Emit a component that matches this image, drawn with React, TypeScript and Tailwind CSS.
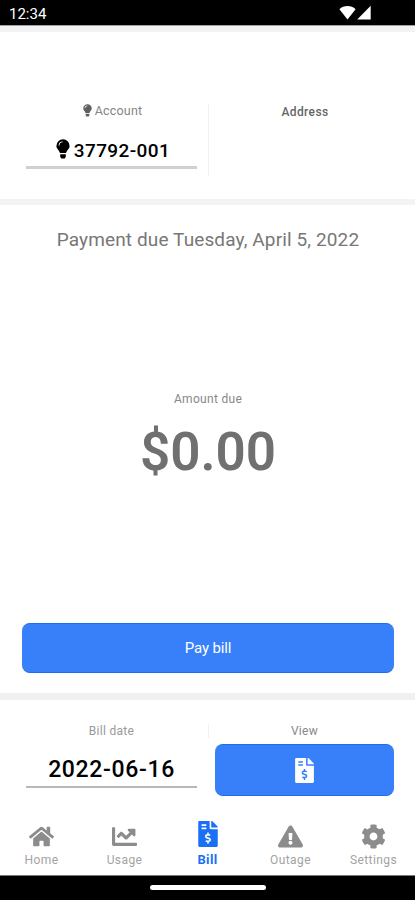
import React from "react";
import {
  FaHome,
  FaChartLine,
  FaFileInvoiceDollar,
  FaExclamationTriangle,
  FaCog,
} from "react-icons/fa";

function Bulb({ className }: { className: string }) {
  return (
    <svg className={className} viewBox="0 0 14 20" fill="currentColor">
      <path
        fillRule="evenodd"
        d="M7 0.3A6.6 6.6 0 0 0 0.4 6.9C0.4 9.8 3.3 11.1 4 14.1H10C10.7 11.1 13.6 9.8 13.6 6.9A6.6 6.6 0 0 0 7 0.3ZM6.6 2.4C4.2 2.4 2.6 4 2.6 6.4H3.5C3.5 4.5 4.8 3.3 6.6 3.3Z"
      />
      <path d="M4.2 15.3H9.8V17.7L8.8 19.4H5.2L4.2 17.7Z" />
    </svg>
  );
}

function StatusBar() {
  return (
    <header className="flex h-[25px] shrink-0 items-start justify-between bg-black pl-[9px] pr-[44px] text-white">
      <span className="pt-[6px] text-[15px] leading-[17px]">12:34</span>
      <div className="flex gap-[1px] pt-[5px]">
        <svg width="17" height="15" viewBox="0 0 17 15" fill="currentColor">
          <path d="M0.4 4.3C4.5 -0.1 12.5 -0.1 16.6 4.3L8.5 14.6Z" />
        </svg>
        <svg width="14" height="15" viewBox="0 0 14 15" fill="currentColor">
          <path d="M13.7 0.8V14.6H0.2Z" />
        </svg>
      </div>
    </header>
  );
}

function AccountPanel() {
  return (
    <section className="flex h-[167px] shrink-0 pt-[72px]">
      <div className="w-[208px] pl-[26px] pr-[11px]">
        <div className="flex h-[13px] items-center justify-center gap-[3px] pl-[2px] text-[12.5px] leading-[13px] text-[#858585]">
          <Bulb className="h-[13px] w-[9px] text-[#606060]" />
          <span className="tracking-[0.2px]">Account</span>
        </div>
        <div className="mt-[18px] flex h-[34px] items-start justify-center gap-[4px] border-b-[3px] border-[#d0d0d0] pl-[3px] pt-[4px] text-black">
          <Bulb className="h-[20px] w-[14px]" />
          <span className="text-[19px] font-medium leading-[23px] tracking-[0.4px]">37792-001</span>
        </div>
      </div>
      <div className="h-[72px] w-px bg-[#f1f1f3]" />
      <div className="w-[192px] pt-[1px] text-center text-[12px] font-medium leading-[14px] tracking-[0.4px] text-[#666]">
        Address
      </div>
    </section>
  );
}

function DuePanel() {
  return (
    <section className="flex h-[488px] shrink-0 flex-col items-center pl-[22px] pr-[21px] text-[#707070]">
      <h1 className="mt-[24px] whitespace-nowrap text-[19px] leading-[22px] tracking-[0.12px] text-[#777]">
        Payment due Tuesday, April 5, 2022
      </h1>
      <p className="mt-[141px] text-[12px] leading-[15px] tracking-[0.3px] text-[#888]">Amount due</p>
      <p className="mt-[13px] text-[53px] font-semibold leading-[64px]">$0.00</p>
      <button className="mt-[139px] h-[50px] w-full rounded-[8px] border-y border-[#1a6ef5] bg-[#3880fa] text-[15px] leading-[18px] tracking-[-0.15px] text-white">
        Pay bill
      </button>
    </section>
  );
}

function BillPanel() {
  return (
    <section className="flex h-[117px] shrink-0 pt-[24px]">
      <div className="w-[208px] pl-[26px] pr-[11px] text-center">
        <div className="text-[12px] leading-[14px] tracking-[0.3px] text-[#999]">Bill date</div>
        <div className="mt-[19px] h-[31px] border-b-[2px] border-[#b8b8b8] text-[23px] font-medium leading-[26px] tracking-[0.65px] text-black">
          2022-06-16
        </div>
      </div>
      <div className="h-[14px] w-px bg-[#f1f1f3]" />
      <div className="flex w-[185px] flex-col pl-[6px]">
        <div className="text-center text-[12px] leading-[14px] tracking-[0.3px] text-[#888]">View</div>
        <button className="mt-[6px] flex h-[52px] items-center justify-center rounded-[8px] border-y border-[#1a6ef5] bg-[#3880fa] text-white">
          <FaFileInvoiceDollar className="h-[25px] w-[19px]" />
        </button>
      </div>
    </section>
  );
}

const tabs = [
  { label: "Home", Icon: FaHome, active: false },
  { label: "Usage", Icon: FaChartLine, active: false },
  { label: "Bill", Icon: FaFileInvoiceDollar, active: true },
  { label: "Outage", Icon: FaExclamationTriangle, active: false },
  { label: "Settings", Icon: FaCog, active: false },
];

function TabBar() {
  return (
    <nav className="grid h-[58px] shrink-0 grid-cols-5">
      {tabs.map(({ label, Icon, active }) => (
        <div
          key={label}
          className={
            active
              ? "flex flex-col items-center pt-[4px] font-bold text-[#1a70f5]"
              : "flex flex-col items-center pt-[7px] text-[#8c8c8c]"
          }
        >
          <Icon className={active ? "h-[26px] w-[20px]" : "h-[25px] w-[25px]"} />
          <span
            className={
              active
                ? "mt-[5px] text-[13px] leading-[15px] tracking-[0.4px]"
                : "mt-[4px] text-[12px] leading-[15px] tracking-[0.4px] text-[#a3a3a3]"
            }
          >
            {label}
          </span>
        </div>
      ))}
    </nav>
  );
}

export default function App() {
  return (
    <main className="flex h-[900px] w-[415px] flex-col overflow-hidden bg-white font-['Roboto',sans-serif]">
      <StatusBar />
      <div className="h-[7px] shrink-0 border-t border-[#a0a0a0] bg-[#f3f3f5]" />
      <AccountPanel />
      <div className="h-[6px] shrink-0 bg-[#f3f3f5]" />
      <DuePanel />
      <div className="h-[7px] shrink-0 bg-[#f0f0f3]" />
      <BillPanel />
      <TabBar />
      <footer className="flex h-[25px] shrink-0 justify-center border-t border-[#777] bg-black pt-[9px]">
        <div className="h-[5px] w-[116px] rounded-full bg-white" />
      </footer>
    </main>
  );
}
